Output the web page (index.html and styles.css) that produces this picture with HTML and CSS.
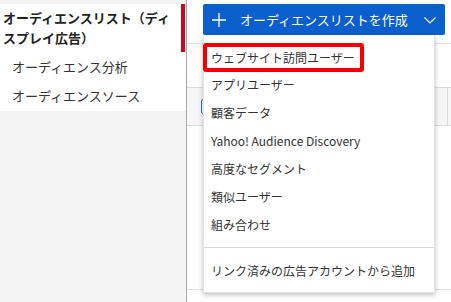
FILE: index.html
```html
<!DOCTYPE html>
<html lang="ja">
<head>
<meta charset="utf-8">
<link rel="stylesheet" href="styles.css">
</head>
<body>
<div class="app">
  <aside class="sidebar">
    <nav class="nav">
      <a class="nav-item active">オーディエンスリスト（ディスプレイ広告）</a>
      <a class="nav-item">オーディエンス分析</a>
      <a class="nav-item">オーディエンスソース</a>
    </nav>
  </aside>
  <main class="main">
    <div class="toolbar">
      <button class="create-btn">
        <svg class="plus" width="14" height="14" viewBox="0 0 14 14"><path d="M7 0V14M0 7H14" stroke="#fff" stroke-width="1.3" fill="none"/></svg>
        <span class="btn-label">オーディエンスリストを作成</span>
        <svg class="chev" width="12" height="7" viewBox="0 0 12 7"><path d="M0.5 0.5L6 6L11.5 0.5" stroke="#fff" stroke-width="1.2" fill="none"/></svg>
      </button>
    </div>
    <div class="table">
      <div class="thead">
        <span class="checkbox"></span>
        <span class="col-sep"></span>
      </div>
      <div class="tbody"></div>
    </div>
    <div class="dropdown">
      <ul class="menu">
        <li class="menu-item highlighted"><span class="mark">ウェブサイト訪問ユーザー</span></li>
        <li class="menu-item">アプリユーザー</li>
        <li class="menu-item">顧客データ</li>
        <li class="menu-item">Yahoo! Audience Discovery</li>
        <li class="menu-item">高度なセグメント</li>
        <li class="menu-item">類似ユーザー</li>
        <li class="menu-item">組み合わせ</li>
      </ul>
      <div class="menu-sep"></div>
      <ul class="menu menu-bottom">
        <li class="menu-item">リンク済みの広告アカウントから追加</li>
      </ul>
    </div>
  </main>
</div>
</body>
</html>
```

FILE: styles.css
```css
* { box-sizing: border-box; }
html, body { margin: 0; padding: 0; }
body {
  width: 451px;
  height: 302px;
  overflow: hidden;
  font-family: "Noto Sans CJK JP", "Noto Sans", sans-serif;
  color: #333;
  background: #fff;
}
.app {
  display: flex;
  height: 302px;
}
.sidebar {
  width: 187px;
  flex: none;
  background: #f3f3f3;
  border-right: 1px solid #a8a8a8;
  padding-top: 4px;
}
.nav {
  background: #fff;
  display: flex;
  flex-direction: column;
  padding-bottom: 1px;
}
.nav-item {
  display: block;
  font-size: 13px;
  line-height: 29px;
  height: 29px;
  padding-left: 12px;
  color: #333;
  white-space: nowrap;
}
.nav-item.active {
  height: 48px;
  line-height: 20px;
  padding: 4px 10px 4px 3px;
  font-weight: bold;
  white-space: normal;
  color: #222;
  border-right: 4px solid #d6001c;
  margin-right: 1px;
}
.main {
  flex: 1;
  position: relative;
  background: #fff;
}
.toolbar {
  height: 44px;
  border-bottom: 1px solid #e2e2e2;
  padding: 4px 0 0 16px;
}
.create-btn {
  display: flex;
  align-items: center;
  width: 242px;
  height: 31px;
  padding: 0 9px;
  border: none;
  border-radius: 2px;
  background: #0b5fcc;
  color: #fff;
  font-family: inherit;
  font-size: 13px;
  cursor: pointer;
}
.plus { flex: none; }
.btn-label {
  margin-left: 14px;
  white-space: nowrap;
}
.chev {
  flex: none;
  margin-left: auto;
  margin-top: 2px;
}
.table {
  margin-top: 43px;
}
.thead {
  height: 39px;
  background: #f6f6f6;
  border-top: 1px solid #dcdcdc;
  border-bottom: 1px solid #dcdcdc;
  display: flex;
  align-items: center;
  padding-left: 14px;
}
.checkbox {
  width: 15px;
  height: 15px;
  border: 1px solid #3b6fb6;
  border-radius: 2px;
  background: #fff;
}
.col-sep {
  margin-left: auto;
  margin-right: 3px;
  width: 1px;
  align-self: stretch;
  background: #dcdcdc;
}
.tbody {
  height: 164px;
  border-bottom: 1px solid #e2e2e2;
}
.dropdown {
  position: absolute;
  left: 16px;
  top: 35px;
  width: 232px;
  height: 258px;
  background: #fff;
  box-shadow: 0 2px 5px rgba(0, 0, 0, 0.25);
  border: 1px solid #e4e4e4;
  border-top: none;
}
.menu {
  list-style: none;
  margin: 0;
  padding: 8px 0 0;
}
.menu-item {
  height: 28px;
  line-height: 28px;
  padding-left: 7px;
  font-size: 12px;
  color: #333;
  white-space: nowrap;
}
.menu-item.highlighted {
  padding-left: 0;
  margin-left: -1px;
}
.mark {
  display: inline-block;
  height: 29px;
  line-height: 21px;
  border: 4px solid #f50000;
  border-radius: 3px;
  padding: 0 5px 0 4px;
  vertical-align: top;
}
.menu-sep {
  margin-top: 8px;
  height: 1px;
  background: #dcdcdc;
}
.menu-bottom {
  padding-top: 9px;
}
```
